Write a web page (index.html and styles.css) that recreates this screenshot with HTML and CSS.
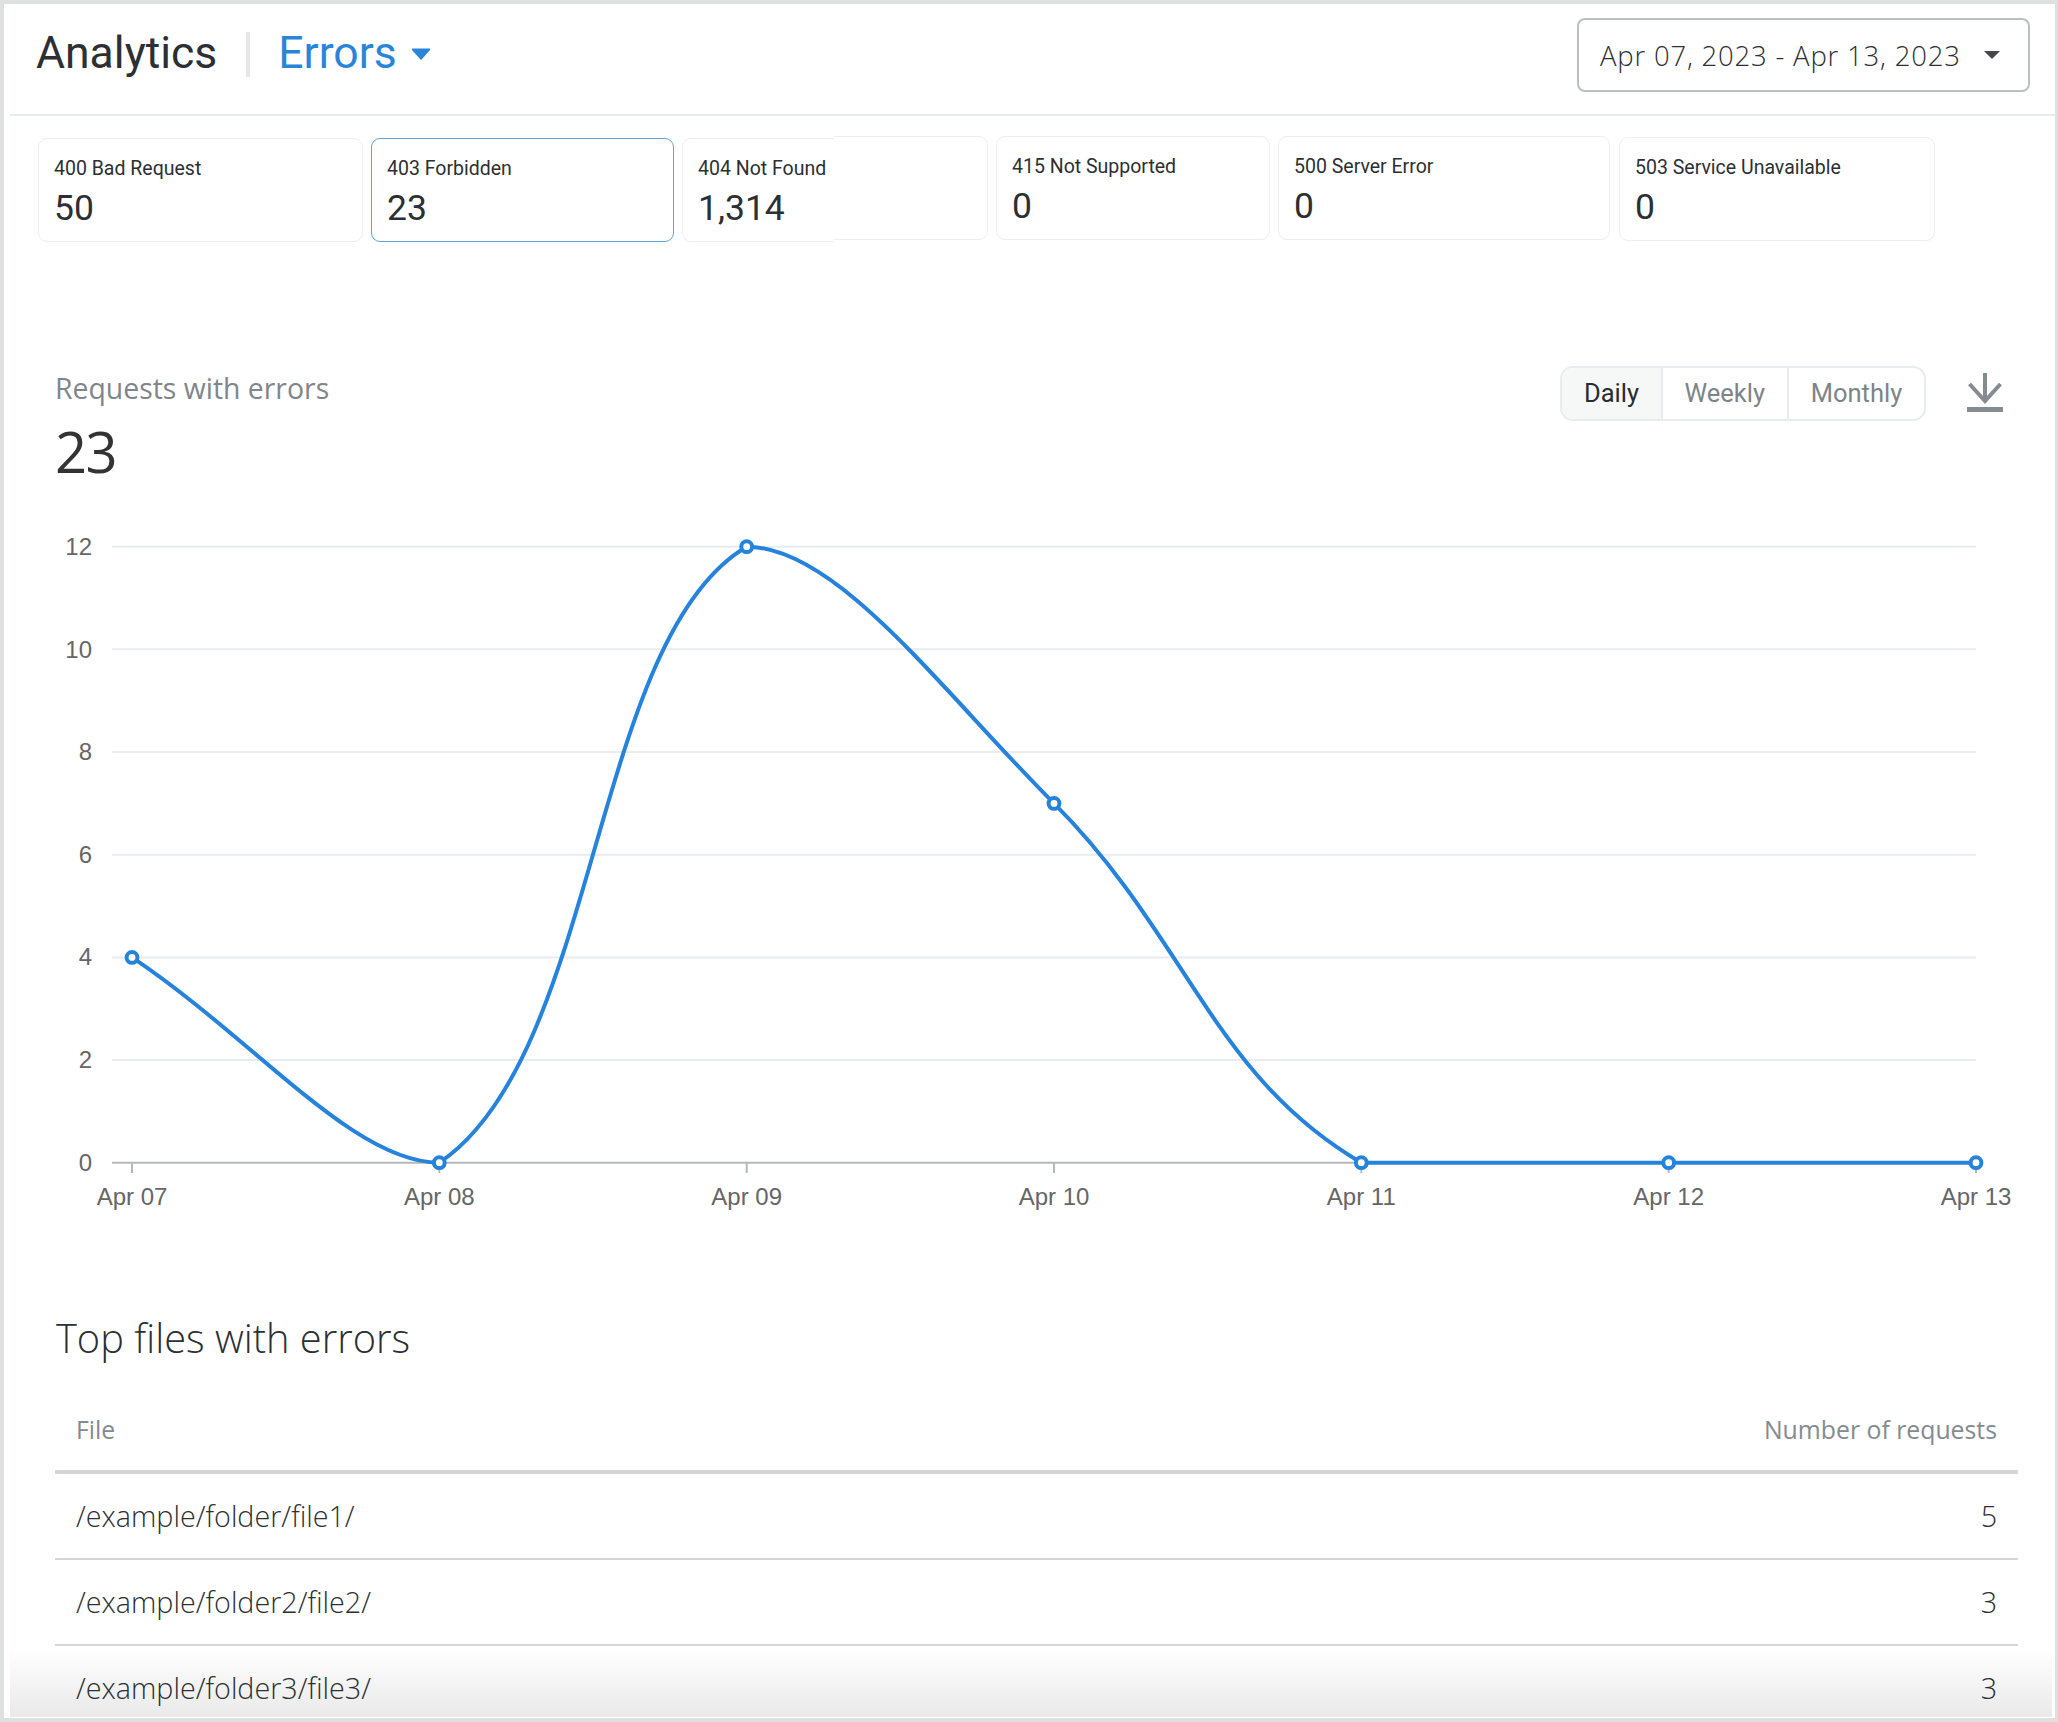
FILE: index.html
```
<!DOCTYPE html>
<html lang="en">
<head>
    <meta charset="UTF-8">
    <title>Analytics - Errors</title>
    <link rel="stylesheet" href="styles.css">
</head>
<body>
    <div class="frame">
        <div class="header">
            <h1 class="page-title">Analytics</h1>
            <div class="title-divider"></div>
            <div class="report-select">
                <span>Errors</span>
                <svg class="report-caret" viewBox="0 0 20 12"><path d="M1.5 0.5 H18.5 Q20 0.5 19 2 L11 11 Q10 12 9 11 L1 2 Q0 0.5 1.5 0.5 Z"/></svg>
            </div>
            <div class="date-range">
                <span>Apr 07, 2023 - Apr 13, 2023</span>
                <svg class="date-caret" viewBox="0 0 16 8"><path d="M0 0 H16 L8 8 Z"/></svg>
            </div>
        </div>

        <div class="cards">
            <div class="card card-400">
                <div class="card-label">400 Bad Request</div>
                <div class="card-value">50</div>
            </div>
            <div class="card card-403 selected">
                <div class="card-label">403 Forbidden</div>
                <div class="card-value">23</div>
            </div>
            <div class="card-split">
                <div class="card card-404">
                    <div class="card-label">404 Not Found</div>
                    <div class="card-value">1,314</div>
                </div>
                <div class="card card-404-end"></div>
            </div>
            <div class="card card-415">
                <div class="card-label">415 Not Supported</div>
                <div class="card-value">0</div>
            </div>
            <div class="card card-500">
                <div class="card-label">500 Server Error</div>
                <div class="card-value">0</div>
            </div>
            <div class="card card-503">
                <div class="card-label">503 Service Unavailable</div>
                <div class="card-value">0</div>
            </div>
        </div>

        <div class="chart-head">
            <div class="chart-summary">
                <div class="chart-label">Requests with errors</div>
                <div class="chart-total">23</div>
            </div>
            <div class="period-toggle">
                <div class="period active">Daily</div>
                <div class="period">Weekly</div>
                <div class="period">Monthly</div>
            </div>
            <svg class="download" viewBox="0 0 36 40">
                <path d="M18 0 V28 M2.5 11 L18 28 L33.5 11" fill="none" stroke="#858c91" stroke-width="4"/>
                <rect y="34" width="36" height="5" fill="#858c91"/>
            </svg>
        </div>

        <svg class="chart" viewBox="4 530 2051 700">
            <!-- grid -->
            <path class="grid" d="M112 546.7 H1976 M112 649.3 H1976 M112 752 H1976 M112 854.7 H1976 M112 957.4 H1976 M112 1060 H1976"/>
            <path class="axis" d="M112 1162.7 H1976 M132 1162.7 V1173 M439.3 1162.7 V1173 M746.7 1162.7 V1173 M1054 1162.7 V1173 M1361.3 1162.7 V1173 M1668.7 1162.7 V1173 M1976 1162.7 V1173"/>

            <g class="y-labels">
                <text x="92" y="554.6">12</text>
                <text x="92" y="657.9">10</text>
                <text x="92" y="759.9">8</text>
                <text x="92" y="862.6">6</text>
                <text x="92" y="965.3">4</text>
                <text x="92" y="1067.9">2</text>
                <text x="92" y="1170.6">0</text>
            </g>
            <g class="x-labels">
                <text x="132" y="1205">Apr 07</text>
                <text x="439.3" y="1205">Apr 08</text>
                <text x="746.7" y="1205">Apr 09</text>
                <text x="1054" y="1205">Apr 10</text>
                <text x="1361.3" y="1205">Apr 11</text>
                <text x="1668.7" y="1205">Apr 12</text>
                <text x="1976" y="1205">Apr 13</text>
            </g>

            <path class="series" d="M132 957.4 C254.9 1039.5 353.4 1162.7 439.3 1162.7 C599.3 1055.8 591.2 637.6 746.7 546.7 C837.1 546.7 941.3 690.4 1054 803.4 C1187.1 936.8 1212.3 1075.6 1361.3 1162.7 H1976"/>
            <g class="points">
                <circle cx="132" cy="957.4" r="5.4"/>
                <circle cx="439.3" cy="1162.7" r="5.4"/>
                <circle cx="746.7" cy="546.7" r="5.4"/>
                <circle cx="1054" cy="803.4" r="5.4"/>
                <circle cx="1361.3" cy="1162.7" r="5.4"/>
                <circle cx="1668.7" cy="1162.7" r="5.4"/>
                <circle cx="1976" cy="1162.7" r="5.4"/>
            </g>
        </svg>

        <h2 class="files-title">Top files with errors</h2>
        <table class="files">
            <thead>
                <tr><th>File</th><th class="num">Number of requests</th></tr>
            </thead>
            <tbody>
                <tr><td>/example/folder/file1/</td><td class="num">5</td></tr>
                <tr><td>/example/folder2/file2/</td><td class="num">3</td></tr>
                <tr><td>/example/folder3/file3/</td><td class="num">3</td></tr>
            </tbody>
        </table>

        <div class="bottom-fade"></div>
    </div>
</body>
</html>
```
FILE: styles.css
```
* {
    box-sizing: border-box;
}

body {
    margin: 0;
    background-color: #fff;
    font-family: Roboto, sans-serif;
    color: #2c2f33;
}

.frame {
    position: relative;
    width: 2058px;
    height: 1722px;
    overflow: hidden;
    background-color: #fff;
    border-style: solid;
    border-color: #dfe1e0;
    border-width: 4px 3px 4px 4px;
}

/* header */
.header {
    display: flex;
    align-items: flex-start;
    height: 112px;
    margin-left: 6px;
    padding: 14px 25px 0 26px;
    border-bottom: 2px solid #e8ecf0;
}

.page-title {
    margin: 13px 0 0;
    font-size: 44.5px;
    font-weight: 400;
    line-height: 45px;
}

.title-divider {
    width: 4px;
    height: 45px;
    margin: 14px 28px 0 29px;
    background-color: #e6e8ea;
}

.report-select {
    display: flex;
    align-items: center;
    gap: 14px;
    margin-top: 13px;
    font-size: 44.5px;
    line-height: 45px;
    color: #2a85da;
}

.report-caret {
    width: 20px;
    height: 12px;
    fill: #2a85da;
}

.date-range {
    display: flex;
    align-items: center;
    gap: 23px;
    width: 453px;
    height: 74px;
    margin-left: auto;
    padding-left: 21px;
    border: 2px solid #bcbfc1;
    border-radius: 8px;
    font-family: "Open Sans", sans-serif;
    font-weight: 300;
    font-size: 27.5px;
    letter-spacing: 0.8px;
    white-space: nowrap;
}

.date-caret {
    width: 16px;
    height: 8px;
    fill: #44484c;
}

/* status cards */
.cards {
    display: flex;
    align-items: flex-start;
    gap: 8px;
    margin-left: 34px;
    padding-top: 20px;
}

.card {
    height: 104px;
    padding: 18px 15px 0;
    border: 1px solid #eceef0;
    border-radius: 9px;
}

.card.selected {
    border-color: #5fa3df;
}

.card-label {
    font-size: 19.5px;
    line-height: 24px;
    white-space: nowrap;
}

.card-value {
    margin-top: 7px;
    font-size: 35.5px;
    line-height: 40px;
}

.card-400 { width: 325px; margin-top: 2px; }
.card-403 { width: 303px; margin-top: 2px; }
.card-415 { width: 274px; }
.card-500 { width: 332px; }
.card-503 { width: 316px; margin: 1px 0 0 1px; }

.card-split {
    display: flex;
    align-items: flex-start;
    width: 306px;
    margin-top: 2px;
}

.card-404 {
    width: 152px;
    border-right: 0;
    border-radius: 9px 0 0 9px;
}

.card-404-end {
    width: 154px;
    margin-top: -2px;
    border-left: 0;
    border-radius: 0 9px 9px 0;
}

/* chart */
.chart-head {
    display: flex;
    align-items: flex-start;
    margin-top: 124px;
    padding: 0 52px 0 51px;
}

.chart-summary {
    flex: 1;
    margin-top: 4px;
    height: 112px;
}

.chart-label {
    font-family: "Open Sans", sans-serif;
    font-weight: 400;
    font-size: 28.4px;
    line-height: 36px;
    color: #7f868b;
}

.chart-total {
    margin-top: 15px;
    font-family: "Open Sans", sans-serif;
    font-weight: 400;
    font-size: 56px;
    line-height: 60px;
    letter-spacing: -1.5px;
    color: #333;
}

.period-toggle {
    display: flex;
    height: 55px;
    border: 2px solid #e8ecf0;
    border-radius: 13px;
    overflow: hidden;
}

.period {
    padding: 0 21.8px;
    font-size: 25.5px;
    line-height: 51px;
    color: #7d8489;
    border-left: 2px solid #e8ecf0;
}

.period.active {
    border-left: 0;
    background-color: #f6f7f7;
    color: #2a2d30;
}

.download {
    width: 36px;
    height: 40px;
    margin: 7px 0 0 41px;
}

.chart {
    display: block;
    width: 2051px;
    height: 700px;
    margin-top: 48px;
}

.grid {
    fill: none;
    stroke: #e8ecf0;
    stroke-width: 2;
}

.axis {
    fill: none;
    stroke: #b5b8bc;
    stroke-width: 2;
}

.y-labels text,
.x-labels text {
    font-family: "Liberation Sans", sans-serif;
    font-size: 24px;
    fill: #666;
}

.y-labels text {
    text-anchor: end;
}

.x-labels text {
    text-anchor: middle;
}

.series {
    fill: none;
    stroke: #2683dc;
    stroke-width: 4;
}

.points circle {
    fill: #fff;
    stroke: #2683dc;
    stroke-width: 4;
}

/* table */
.files-title {
    margin: 84px 0 0 52px;
    font-family: "Open Sans", sans-serif;
    font-weight: 300;
    font-size: 39.8px;
    line-height: 48px;
}

.files {
    position: relative;
    z-index: 1;
    width: 1963px;
    margin: 28px 0 0 51px;
    border-collapse: separate;
    border-spacing: 0;
    font-family: "Open Sans", sans-serif;
    font-weight: 300;
}

.files th {
    height: 84px;
    padding: 0 21px 2px 21px;
    border-bottom: 4px solid #d5d6da;
    font-size: 24.8px;
    font-weight: 400;
    text-align: left;
    color: #848b90;
}

.files td {
    height: 86px;
    padding: 0 21px 2px 21px;
    border-bottom: 2px solid #d5d6da;
    font-size: 28.7px;
}

.files .num {
    text-align: right;
}

.bottom-fade {
    position: absolute;
    left: 6px;
    right: 3px;
    bottom: 1px;
    height: 67px;
    background: linear-gradient(to bottom, rgba(232, 232, 232, 0), rgba(232, 232, 232, 0.95));
}
```
